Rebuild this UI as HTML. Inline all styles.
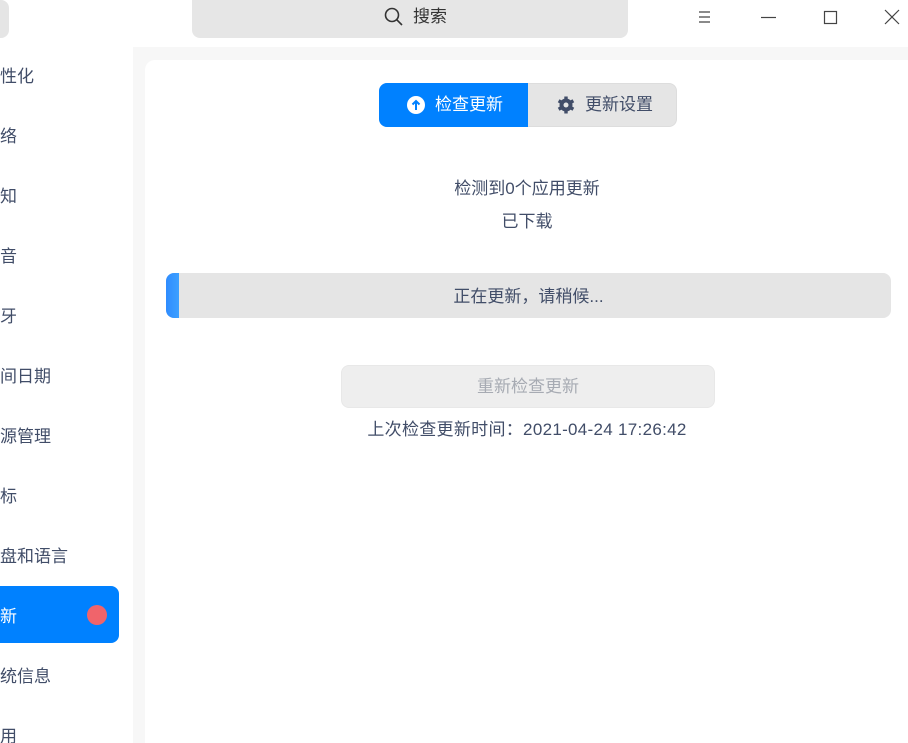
<!DOCTYPE html>
<html><head><meta charset="utf-8"><style>
*{margin:0;padding:0;box-sizing:border-box}
html,body{width:908px;height:743px;overflow:hidden}
body{background:#f7f7f7;font-family:"Liberation Sans","Noto Sans CJK SC",sans-serif;color:#414d68;position:relative}
.top{position:absolute;left:0;top:0;width:908px;height:47px;background:#fff}
.lb{position:absolute;left:-20px;top:0;width:29px;height:38px;background:#e5e5e5;border-radius:8px}
.search{position:absolute;left:192px;top:0;width:436px;height:38px;background:#e6e6e6;border-radius:0 0 8px 8px;font-size:17px;color:#333}
.side{position:absolute;left:0;top:47px;width:133px;height:696px;background:#fff}
.item{position:absolute;left:0;font-size:17px;color:#414d68;height:20px;line-height:20px}
.act{position:absolute;left:-10px;top:586px;width:129px;height:57px;background:#0081ff;border-radius:8px}
.dot{position:absolute;left:87px;top:605px;width:20px;height:20px;border-radius:50%;background:#f0646b}
.main{position:absolute;left:145px;top:60px;width:780px;height:683px;background:#fff;border-radius:10px 10px 0 0}
.c{position:absolute;text-align:center;font-size:17px;line-height:20px}
</style></head><body>
<div class="top"></div>
<div class="lb"></div>
<div class="search"><svg style="position:absolute;left:191px;top:6px" width="22" height="22" viewBox="0 0 22 22"><circle cx="9" cy="9" r="6.5" fill="none" stroke="#333" stroke-width="1.6"/><line x1="13.7" y1="13.7" x2="19" y2="19" stroke="#333" stroke-width="1.6"/></svg><span style="position:absolute;left:221px;top:7px;line-height:20px">搜索</span></div>
<svg style="position:absolute;left:697px;top:9px" width="16" height="16"><path d="M2 3h11M2 8h11M2 13h11" stroke="#444" stroke-width="1.2"/></svg>
<svg style="position:absolute;left:760px;top:9px" width="16" height="16"><path d="M1 8.5h15" stroke="#444" stroke-width="1.2"/></svg>
<svg style="position:absolute;left:823px;top:10px" width="16" height="16"><rect x="1.5" y="1.5" width="12" height="12" fill="none" stroke="#444" stroke-width="1.2"/></svg>
<svg style="position:absolute;left:883px;top:8px" width="18" height="18"><path d="M2 2l14 14M16 2L2 16" stroke="#444" stroke-width="1.2"/></svg>
<div class="side"></div>
<div class="act"></div><div class="dot"></div>
<div class="item" style="top:67px">性化</div>
<div class="item" style="top:127px">络</div>
<div class="item" style="top:187px">知</div>
<div class="item" style="top:247px">音</div>
<div class="item" style="top:307px">牙</div>
<div class="item" style="top:367px">间日期</div>
<div class="item" style="top:427px">源管理</div>
<div class="item" style="top:487px">标</div>
<div class="item" style="top:547px">盘和语言</div>
<div class="item" style="top:607px;color:#fff">新</div>
<div class="item" style="top:667px">统信息</div>
<div class="item" style="top:727px">用</div>
<div class="main"></div>
<div style="position:absolute;left:379px;top:83px;width:298px;height:44px;border-radius:8px;background:#e5e5e5;border:1px solid #ddd"></div>
<div style="position:absolute;left:379px;top:83px;width:149px;height:44px;border-radius:8px 0 0 8px;background:#0081ff"></div>
<svg style="position:absolute;left:406px;top:95px" width="20" height="20"><circle cx="10" cy="10" r="9" fill="#fff"/><path d="M10 15V6M6.5 9.5L10 6l3.5 3.5" stroke="#0081ff" stroke-width="2" fill="none"/></svg>
<div class="c" style="left:435px;top:95px;color:#fff">检查更新</div>
<svg style="position:absolute;left:556px;top:95px" width="20" height="20" viewBox="0 0 20 20"><g fill="#414d68"><circle cx="10" cy="10" r="6.5"/><rect x="8.3" y="1.5" width="3.4" height="17"/><rect x="8.3" y="1.5" width="3.4" height="17" transform="rotate(60 10 10)"/><rect x="8.3" y="1.5" width="3.4" height="17" transform="rotate(120 10 10)"/></g><circle cx="10" cy="10" r="2.5" fill="#e5e5e5"/></svg>
<div class="c" style="left:585px;top:95px">更新设置</div>
<div class="c" style="left:145px;width:764px;top:179px">检测到0个应用更新</div>
<div class="c" style="left:145px;width:764px;top:212px">已下载</div>
<div style="position:absolute;left:166px;top:273px;width:725px;height:45px;background:#e5e5e5;border-radius:8px;overflow:hidden"><div style="width:13px;height:45px;background:linear-gradient(90deg,#2f8cff,#3da0ff)"></div></div>
<div class="c" style="left:166px;width:725px;top:287px">正在更新，请稍候...</div>
<div style="position:absolute;left:341px;top:365px;width:374px;height:43px;background:#eeeeee;border-radius:8px;border:1px solid #e8e8e8"></div>
<div class="c" style="left:341px;width:374px;top:377px;color:#a7abb3">重新检查更新</div>
<div class="c" style="left:145px;width:764px;top:420px;letter-spacing:0.3px">上次检查更新时间：2021-04-24 17:26:42</div>
</body></html>
